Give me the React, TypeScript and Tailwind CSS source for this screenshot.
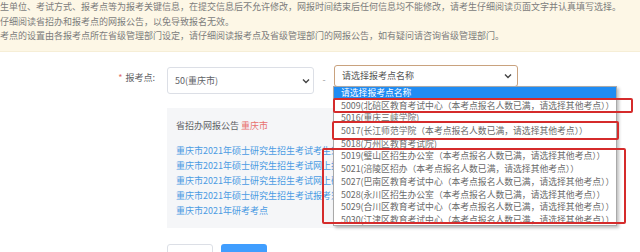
import React from "react";

const notice = [
  "生单位、考试方式、报考点等为报考关键信息，在提交信息后不允许修改，网报时间结束后任何信息均不能修改，请考生仔细阅读页面文字并认真填写选择。",
  "仔细阅读省招办和报考点的网报公告，以免导致报名无效。",
  "考点的设置由各报考点所在省级管理部门设定，请仔细阅读报考点及省级管理部门的网报公告，如有疑问请咨询省级管理部门。",
];

const links = [
  "重庆市2021年硕士研究生招生考试考生须知",
  "重庆市2021年硕士研究生招生考试网上报名公告",
  "重庆市2021年硕士研究生招生考试网上确认公告",
  "重庆市2021年硕士研究生招生考试报考须知",
  "重庆市2021年研考考点",
];

const options = [
  "请选择报考点名称",
  "5009(北碚区教育考试中心（本考点报名人数已满，请选择其他考点））",
  "5016(重庆三峡学院)",
  "5017(长江师范学院（本考点报名人数已满，请选择其他考点））",
  "5018(万州区教育考试院)",
  "5019(璧山区招生办公室（本考点报名人数已满，请选择其他考点））",
  "5021(涪陵区招办（本考点报名人数已满，请选择其他考点））",
  "5027(巴南区教育考试中心（本考点报名人数已满，请选择其他考点））",
  "5028(永川区招生办公室（本考点报名人数已满，请选择其他考点））",
  "5029(合川区教育考试中心（本考点报名人数已满，请选择其他考点））",
  "5030(江津区教育考试中心（本考点报名人数已满，请选择其他考点））",
];

const Chevron = () => (
  <svg width="8" height="6" viewBox="0 0 8 6" className="shrink-0">
    <path d="M1 1.5 L4 4.5 L7 1.5" fill="none" stroke="#444" strokeWidth="1.4" />
  </svg>
);

export default function App() {
  return (
    <div className="relative w-[640px] h-[252px] overflow-hidden bg-white font-['Noto_Sans_CJK_SC','Noto_Sans',sans-serif] text-[9px]">
      {/* notice */}
      <div className="h-[52px] bg-[#fdf7e6] border-b border-[#f6eed6] text-[#7c7c7c] leading-[14.5px] whitespace-nowrap">
        {notice.map((line, i) => (
          <p key={i}>{line}</p>
        ))}
      </div>

      {/* form row */}
      <div className="flex items-start mt-[13px]">
        <div className="w-[155px] text-right text-[#606266] mt-[7px] leading-[12px]">
          <span className="text-[#e06a6a] mr-[3px]">*</span>报考点:
        </div>
        <div className="ml-[12px] w-[147px] h-[27px] mt-[2px] border border-[#dcdfe6] rounded-[3px] flex items-center justify-between pl-[7px] pr-[3px] text-[#606266]">
          <span>50(重庆市)</span>
          <Chevron />
        </div>
        <div className="w-[20px] text-center text-[#999] mt-[8px]">-</div>
        <div className="relative">
          <div className="w-[184px] h-[22px] border border-[#c9a27e] rounded-[3px] flex items-center justify-between pl-[7px] pr-[5px] text-[#555]">
            <span>请选择报考点名称</span>
            <Chevron />
          </div>
          <div className="absolute z-10 left-[-1px] top-[21px] w-[284px] h-[140px] overflow-hidden bg-white border border-[#a9a9a9] shadow-[2px_2px_3px_rgba(0,0,0,0.25)] text-[#6a6a6a] text-[8.8px] whitespace-nowrap">
            {options.map((o, i) => (
              <div
                key={i}
                className={`h-[12.7px] leading-[12.7px] pl-[7px] ${i === 0 ? "bg-[#1f8cf3] text-white" : ""}`}
              >
                {o}
              </div>
            ))}
          </div>
        </div>
      </div>

      {/* announcements panel */}
      <div className="ml-[167px] mt-[14px] w-[353px] h-[120px] bg-[#f5f6f8] pl-[9px] pt-[11px] whitespace-nowrap overflow-hidden">
        <p className="text-[#606266] leading-[14px]">
          省招办网报公告 <span className="text-[#e8716e]">重庆市</span>
        </p>
        <div className="mt-[10px] text-[#4b9be3] leading-[15px]">
          {links.map((l, i) => (
            <p key={i}>{l}</p>
          ))}
        </div>
      </div>

      {/* buttons */}
      <div className="ml-[167px] mt-[16px] flex gap-[8px]">
        <button className="w-[46px] h-[28px] border border-[#dcdfe6] rounded-[3px] bg-white text-[#606266]">上一步</button>
        <button className="w-[46px] h-[28px] rounded-[3px] bg-[#409eff] text-white">下一步</button>
      </div>

      {/* red annotation boxes */}
      <div className="absolute z-20 left-[333px] top-[98px] w-[300px] h-[15px] border-2 border-[#d52b2b] rounded-[2px]" />
      <div className="absolute z-20 left-[332px] top-[121px] w-[287px] h-[19px] border-2 border-[#d52b2b] rounded-[2px]" />
      <div className="absolute z-20 left-[322px] top-[148px] w-[304px] h-[76px] border-2 border-[#d52b2b] rounded-[2px]" />
    </div>
  );
}
